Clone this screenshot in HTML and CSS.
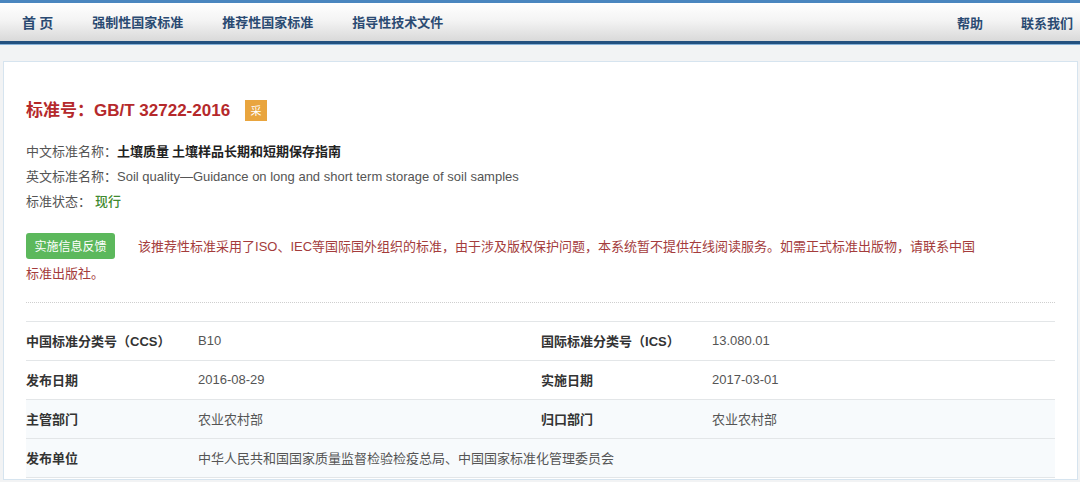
FILE: index.html
```html
<!DOCTYPE html>
<html lang="zh-CN">
<head>
<meta charset="UTF-8">
<meta name="viewport" content="width=device-width, initial-scale=1.0">
<title>GB/T 32722-2016</title>
<link rel="stylesheet" href="styles.css">
</head>
<body>
<div class="topnav">
    <div class="nav-left">
        <a class="nav-home" href="#">首 页</a>
        <a href="#">强制性国家标准</a>
        <a href="#">推荐性国家标准</a>
        <a href="#">指导性技术文件</a>
    </div>
    <div class="nav-right">
        <a href="#">帮助</a>
        <a href="#">联系我们</a>
    </div>
</div>

<div class="page">
    <div class="card">
        <h1 class="std-title">标准号：<span class="en">GB/T 32722-2016</span><span class="badge">采</span></h1>

        <div class="info">
            <p>中文标准名称：<b>土壤质量 土壤样品长期和短期保存指南</b></p>
            <p>英文标准名称：<span class="en">Soil quality—Guidance on long and short term storage of soil samples</span></p>
            <p>标准状态：<span class="status">现行</span></p>
        </div>

        <div class="notice">
            <div class="notice-row">
                <button class="btn-feedback">实施信息反馈</button>
                <span>该推荐性标准采用了<span class="en">ISO</span>、<span class="en">IEC</span>等国际国外组织的标准，由于涉及版权保护问题，本系统暂不提供在线阅读服务。如需正式标准出版物，请联系中国</span>
            </div>
            <p class="notice-more">标准出版社。</p>
        </div>

        <hr class="dotted">

        <table class="detail">
            <colgroup>
                <col style="width:172px">
                <col style="width:343px">
                <col style="width:171px">
                <col>
            </colgroup>
            <tr>
                <th>中国标准分类号（<span class="en">CCS</span>）</th>
                <td class="en">B10</td>
                <th>国际标准分类号（<span class="en">ICS</span>）</th>
                <td class="en">13.080.01</td>
            </tr>
            <tr>
                <th>发布日期</th>
                <td class="en">2016-08-29</td>
                <th>实施日期</th>
                <td class="en">2017-03-01</td>
            </tr>
            <tr class="tint">
                <th>主管部门</th>
                <td>农业农村部</td>
                <th>归口部门</th>
                <td>农业农村部</td>
            </tr>
            <tr class="tint">
                <th>发布单位</th>
                <td colspan="3">中华人民共和国国家质量监督检验检疫总局、中国国家标准化管理委员会</td>
            </tr>
        </table>
    </div>
</div>
</body>
</html>
```

FILE: styles.css
```css
body {
    margin: 0;
    padding: 0;
    font-family: "Noto Sans CJK SC", "Liberation Sans", sans-serif;
    font-size: 13px;
    color: #333;
    background-color: #f2f3f4;
    overflow: hidden;
}
.en {
    font-family: "Liberation Sans", Arial, sans-serif;
}
.topnav {
    display: flex;
    justify-content: space-between;
    align-items: center;
    height: 38px;
    border-top: 3px solid #4a86bf;
    border-bottom: 3px solid #22507f;
    box-shadow: 0 1px 0 #86b1d8;
    background: linear-gradient(#ffffff, #f4f4f4 45%, #d9d9d9);
    padding: 0 7px 0 22px;
}
.topnav a {
    color: #2a4a72;
    font-weight: bold;
    font-size: 13px;
    text-decoration: none;
}
.nav-left, .nav-right {
    display: flex;
    gap: 39px;
}
.nav-right {
    gap: 38px;
}
.nav-home {
    font-size: 14px !important;
}
.page {
    padding: 17px 2px 0 3px;
}
.card {
    background-color: #fff;
    border: 1px solid #d6e4ef;
    padding: 35px 22px 0 22px;
    height: 382px;
}
.std-title {
    margin: 0;
    font-size: 17px;
    line-height: 24px;
    height: 24px;
    color: #b5292b;
    font-weight: bold;
}
.std-title .badge {
    display: inline-block;
    vertical-align: 1px;
    margin-left: 15px;
    width: 22px;
    height: 21px;
    line-height: 21px;
    text-align: center;
    font-size: 11px;
    font-weight: normal;
    color: #fff;
    background-color: #e9a53e;
}
.info {
    margin-top: 18px;
    color: #555;
}
.info p {
    margin: 0;
    line-height: 24.5px;
}
.info b {
    color: #222;
}
.status {
    margin-left: 4px;
    color: #3f8a2f;
    font-weight: 500;
}
.notice {
    margin-top: 19px;
    line-height: 26px;
    color: #a43c3c;
}
.notice-row {
    display: flex;
    align-items: center;
    gap: 23px;
    white-space: nowrap;
}
.notice-more {
    margin: 0;
}
.btn-feedback {
    flex: none;
    height: 26px;
    width: 89px;
    padding: 0;
    border: none;
    border-radius: 3px;
    background-color: #5cb85c;
    color: #fff;
    font-family: "Noto Sans CJK SC", sans-serif;
    font-size: 12px;
    line-height: 26px;
    cursor: pointer;
}
.dotted {
    margin: 16px 0 0 0;
    border: none;
    border-top: 1px dotted #cfcfcf;
}
.detail {
    width: 100%;
    margin-top: 18px;
    border-collapse: collapse;
    table-layout: fixed;
    border-top: 1px solid #e3e6e8;
}
.detail th, .detail td {
    height: 38px;
    padding: 0;
    text-align: left;
    border-bottom: 1px solid #e3e6e8;
    white-space: nowrap;
}
.detail th {
    font-weight: bold;
    color: #333;
}
.detail td {
    color: #555;
}
.detail tr.tint {
    background-color: #f7fafc;
}
```
